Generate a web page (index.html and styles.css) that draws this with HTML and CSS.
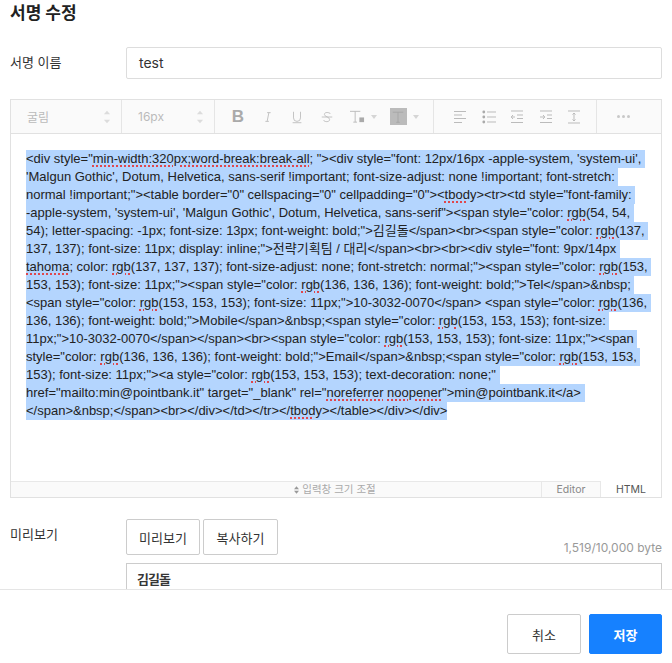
FILE: index.html
```html
<!DOCTYPE html>
<html lang="ko">
<head>
<meta charset="utf-8">
<title>서명 수정</title>
<link rel="stylesheet" href="styles.css">
</head>
<body>
<main class="main">
  <h1 class="title">서명 수정</h1>
  <div class="row name-row">
    <label class="label">서명 이름</label>
    <div class="input">test</div>
  </div>
  <section class="editor">
    <div class="toolbar">
      <div class="tool-select font-select"><span>굴림</span>
        <svg class="spin" viewBox="0 0 9 16"><path d="M4.500 1 8 5H1zM4.500 15 1 11h7z"/></svg></div>
      <div class="tool-select size-select"><span>16px</span>
        <svg class="spin" viewBox="0 0 9 16"><path d="M4.500 1 8 5H1zM4.500 15 1 11h7z"/></svg></div>
      <div class="tool-group text-group">
        <span class="bold-b">B</span>
        <svg class="ico" viewBox="0 0 16 16"><path d="M7 3h4M5 13h4M9 3 7 13" /></svg>
        <svg class="ico" viewBox="0 0 16 16"><path d="M4 2v7a4 4 0 0 0 8 0V2M3 14.500h10"/></svg>
        <svg class="ico" viewBox="0 0 16 16"><path d="M12 4.500C11 2.500 5 2 5 5c0 3 6 2.500 6 6 0 3-6 3-7 .5M2 8h12"/></svg>
        <span class="with-caret"><svg class="ico wide" viewBox="0 0 18 16"><path d="M1 2.500h11M6.500 2.500V14M4.500 14h4"/><rect class="fill" x="11" y="9" width="5" height="5"/></svg><i class="caret"></i></span>
        <span class="with-caret"><span class="swatch"><svg class="ico" viewBox="0 0 16 16"><path d="M2 2.500h12M8 2.500V14M6 14h4"/></svg></span><i class="caret"></i></span>
      </div>
      <div class="tool-group para-group">
        <svg class="ico" viewBox="0 0 14 14"><path d="M1 1.500h12M1 5h8M1 8.500h12M1 12.500h8"/></svg>
        <svg class="ico" viewBox="0 0 14 14"><circle class="fill" cx="1.800" cy="2" r="1.400"/><circle class="fill" cx="1.800" cy="7" r="1.400"/><circle class="fill" cx="1.800" cy="12" r="1.400"/><path d="M5 2h9M5 7h9M5 12h9" /></svg>
        <svg class="ico" viewBox="0 0 14 14"><path d="M1 1h12M7 5h6M7 8.500h6M1 12.500h12M5 7H1.500M3 5 1.200 7 3 9"/></svg>
        <svg class="ico" viewBox="0 0 14 14"><path d="M1 1h12M8 5h5M8 8.500h5M1 12.500h12M1 7h4.500M4 5l1.800 2L4 9"/></svg>
        <svg class="ico" viewBox="0 0 14 14"><path d="M1 1h12M1 13h12M7 3v8M5.500 4.500 7 3l1.500 1.500M5.500 9.500 7 11l1.500-1.500"/></svg>
      </div>
      <div class="tool-group more-group"><i class="dot"></i><i class="dot"></i><i class="dot"></i></div>
    </div>
    <div class="code">
      <span class="ln">&lt;div style="<u>min-width:320px;word-break:break-all</u>; "&gt;&lt;div style="font: 12px/16px -apple-system, 'system-ui', </span>
      <span class="ln">'Malgun Gothic', Dotum, Helvetica, sans-serif !important; font-size-adjust: none !important; font-stretch: </span>
      <span class="ln">normal !important;"&gt;&lt;table border="0" cellspacing="0" cellpadding="0"&gt;&lt;<u>tbody</u>&gt;&lt;tr&gt;&lt;td style="font-family: </span>
      <span class="ln">-apple-system, 'system-ui', 'Malgun Gothic', Dotum, Helvetica, sans-serif"&gt;&lt;span style="color: <u>rgb</u>(54, 54, </span>
      <span class="ln">54); letter-spacing: -1px; font-size: 13px; font-weight: bold;"&gt;김길돌&lt;/span&gt;&lt;br&gt;&lt;span style="color: <u>rgb</u>(137, </span>
      <span class="ln">137, 137); font-size: 11px; display: inline;"&gt;전략기획팀 / 대리&lt;/span&gt;&lt;br&gt;&lt;br&gt;&lt;div style="font: 9px/14px </span>
      <span class="ln"><u>tahoma</u>; color: <u>rgb</u>(137, 137, 137); font-size-adjust: none; font-stretch: normal;"&gt;&lt;span style="color: <u>rgb</u>(153, </span>
      <span class="ln">153, 153); font-size: 11px;"&gt;&lt;span style="color: <u>rgb</u>(136, 136, 136); font-weight: bold;"&gt;Tel&lt;/span&gt;&amp;nbsp; </span>
      <span class="ln">&lt;span style="color: <u>rgb</u>(153, 153, 153); font-size: 11px;"&gt;10-3032-0070&lt;/span&gt; &lt;span style="color: <u>rgb</u>(136, </span>
      <span class="ln">136, 136); font-weight: bold;"&gt;Mobile&lt;/span&gt;&amp;nbsp;&lt;span style="color: <u>rgb</u>(153, 153, 153); font-size: </span>
      <span class="ln">11px;"&gt;10-3032-0070&lt;/span&gt;&lt;/span&gt;&lt;br&gt;&lt;span style="color: <u>rgb</u>(153, 153, 153); font-size: 11px;"&gt;&lt;span </span>
      <span class="ln">style="color: <u>rgb</u>(136, 136, 136); font-weight: bold;"&gt;Email&lt;/span&gt;&amp;nbsp;&lt;span style="color: <u>rgb</u>(153, 153, </span>
      <span class="ln">153); font-size: 11px;"&gt;&lt;a style="color: <u>rgb</u>(153, 153, 153); text-decoration: none;" </span>
      <span class="ln">href="mailto:min@pointbank.it" target="_blank" rel="<u>noreferrer</u> <u>noopener</u>"&gt;min@pointbank.it&lt;/a&gt; </span>
      <span class="ln">&lt;/span&gt;&amp;nbsp;&lt;/span&gt;&lt;br&gt;&lt;/div&gt;&lt;/td&gt;&lt;/tr&gt;&lt;/<u>tbody</u>&gt;&lt;/table&gt;&lt;/div&gt;&lt;/div&gt;</span>
    </div>
    <div class="statusbar">
      <div class="resize"><svg class="updown" viewBox="0 0 6 9"><path d="M3 0 6 3.500H0zM3 9 0 5.500h6z"/></svg>입력창 크기 조절</div>
      <div class="tab tab-editor">Editor</div>
      <div class="tab tab-html">HTML</div>
    </div>
  </section>
  <div class="row preview-row">
    <div class="label">미리보기</div>
    <div class="preview-col">
      <div class="preview-actions">
        <button class="btn">미리보기</button>
        <button class="btn">복사하기</button>
        <span class="bytes">1,519/10,000 byte</span>
      </div>
      <div class="preview-box"><strong>김길돌</strong></div>
    </div>
  </div>
</main>
<footer class="footer">
  <button class="btn btn-lg">취소</button>
  <button class="btn btn-lg btn-primary">저장</button>
</footer>
</body>
</html>
```

FILE: styles.css
```css
* { box-sizing: border-box; }
html, body { margin: 0; height: 100%; }
body {
  display: flex;
  flex-direction: column;
  height: 663px;
  overflow: hidden;
  background: #fff;
  color: #333;
  font-family: Inter, "Noto Sans CJK KR", sans-serif;
}
.main {
  height: 589px;
  overflow: hidden;
  padding: 0 10px;
  flex: none;
}
.title {
  margin: 0;
  padding-top: 2px;
  height: 47px;
  font-size: 17px;
  line-height: 22px;
  font-weight: 700;
  color: #222;
}
.row { display: flex; }
.label {
  width: 116px;
  flex: none;
  font-size: 13px;
  color: #333;
}
.name-row { height: 52px; }
.name-row .label { line-height: 31px; }
.input {
  flex: 1;
  height: 32px;
  border: 1px solid #ddd;
  border-radius: 2px;
  padding: 0 12px;
  font-size: 14px;
  line-height: 30px;
  color: #333;
}
.editor {
  height: 399px;
  border: 1px solid #e1e1e1;
  display: flex;
  flex-direction: column;
}
.toolbar {
  height: 34px;
  flex: none;
  display: flex;
  background: #fafafa;
  border-bottom: 1px solid #e1e1e1;
  color: #aaa;
}
.tool-select {
  display: flex;
  align-items: center;
  justify-content: space-between;
  border-right: 1px solid #e5e5e5;
  font-size: 12px;
  color: #bbb;
  padding: 0 10px 0 16px;
}
.font-select { width: 111px; }
.size-select { width: 93px; }
.spin { width: 8px; height: 16px; fill: #dcdcdc; }
.tool-group {
  display: flex;
  align-items: center;
  border-right: 1px solid #e5e5e5;
}
.text-group { width: 219px; padding-left: 16px; gap: 15.500px; }
.para-group { width: 163px; padding-left: 19px; gap: 14.500px; }
.more-group { flex: 1; border-right: 0; justify-content: center; gap: 2px; padding-right: 12px; }
.bold-b { font-size: 17px; font-weight: 700; color: #aaa; width: 14px; text-align: center; line-height: 16px; font-family: "Liberation Sans", sans-serif; }
.ico {
  width: 14px;
  height: 14px;
  fill: none;
  stroke: #bbb;
  stroke-width: 1;
  flex: none;
  display: block;
}
.ico.wide { width: 17px; height: 15px; }
.ico .fill, .fill { fill: #aaa; stroke: none; }
.with-caret { display: flex; align-items: center; gap: 5px; }
.with-caret:last-child { margin-left: -3px; gap: 6px; }
.swatch {
  width: 17px; height: 17px;
  background: #bbb;
  display: flex; align-items: center; justify-content: center;
}
.swatch .ico { stroke: #a5a5a5; }
.caret {
  width: 0; height: 0;
  border: 3.500px solid transparent;
  border-top: 4px solid #d5d5d5;
  border-bottom: 0;
}
.dot {
  width: 3px; height: 3px;
  border-radius: 50%;
  background: #c8c8c8;
}
.code {
  flex: 1;
  padding: 16px 15px;
  font-family: "Liberation Sans", "Noto Sans CJK KR", sans-serif;
  font-size: 13px;
  line-height: 18px;
  color: #222;
  overflow: hidden;
}
.ln {
  display: block;
  width: fit-content;
  background: #b4d5fe;
  white-space: pre;
}
.ln u {
  text-decoration: underline dotted #e0474c;
  text-decoration-thickness: 1.500px;
  text-underline-offset: 2px;
}
.statusbar {
  height: 16px;
  flex: none;
  display: flex;
  background: #fafafa;
  border-top: 1px solid #e8e8e8;
  font-size: 10.500px;
  line-height: 15px;
  color: #999;
}
.resize {
  flex: 1;
  display: flex;
  align-items: center;
  justify-content: center;
  gap: 3px;
  padding-left: 118px;
  color: #aaa;
}
.updown { width: 5px; height: 8px; fill: #999; }
.tab {
  width: 60px;
  text-align: center;
  color: #888;
}
.tab-editor { border-left: 1px solid #e8e8e8; border-right: 1px solid #e8e8e8; }
.tab-html { background: #fff; color: #555; margin-top: -1px; padding-top: 1px; }
.preview-row { margin-top: 21px; }
.preview-row .label { line-height: 30px; }
.preview-col { flex: 1; min-width: 0; }
.preview-actions {
  display: flex;
  gap: 3px;
  align-items: flex-end;
}
.btn {
  width: 74px;
  height: 36px;
  padding: 0;
  background: #fff;
  border: 1px solid #ccc;
  border-radius: 2px;
  font-family: inherit;
  font-size: 13px;
  color: #333;
}
.preview-actions .btn + .btn { width: 75px; }
.bytes {
  margin-left: auto;
  font-size: 12px;
  line-height: 15px;
  color: #999;
}
.preview-box {
  margin-top: 8px;
  height: 60px;
  border: 1px solid #ccc;
  padding: 5px 10px;
  font-size: 13px;
  line-height: 20px;
  letter-spacing: -1px;
  color: #363636;
}
.footer {
  flex: 1;
  display: flex;
  justify-content: flex-end;
  gap: 8px;
  padding: 24px 10px 0;
  border-top: 1px solid #e5e5e5;
}
.btn-lg { height: 40px; width: 74px; }
.btn-primary {
  width: 73px;
  background: #1681ff;
  border-color: #1681ff;
  color: #fff;
  font-weight: 700;
}
```
